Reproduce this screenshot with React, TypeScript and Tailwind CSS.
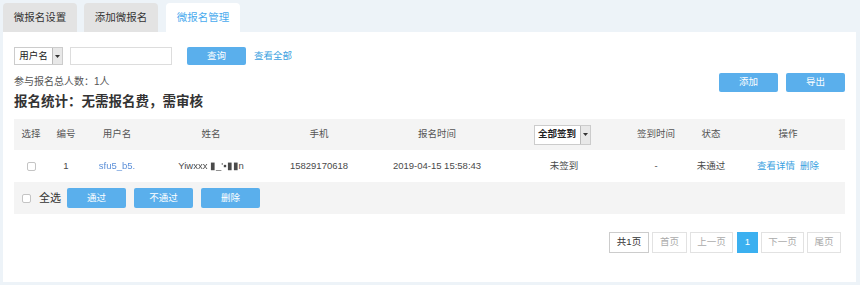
import React from 'react';

const font = "font-['Liberation_Sans','Noto_Sans_CJK_SC',sans-serif]";

const Arrow: React.FC = () => (
  <span className="flex h-full w-[10px] items-center justify-center border-l border-[#bbb] bg-[#e8e8e8]">
    <svg width="5" height="3" viewBox="0 0 5 3">
      <path d="M0 0h5L2.5 3z" fill="#333" />
    </svg>
  </span>
);

const Checkbox: React.FC = () => (
  <span className="inline-block h-[9px] w-[9px] rounded-[2px] border border-[#c4c4c4] bg-white" />
);

const BlueButton: React.FC<{ label: string; className?: string }> = ({ label, className = '' }) => (
  <button className={`h-[19px] w-[59px] rounded-[2px] bg-[#5aafec] text-[9.5px] text-white ${className}`}>{label}</button>
);

const cols = 'grid grid-cols-[34px_36px_66px_122px_94px_142px_112px_72px_38px_116px] items-center text-center';

const PageBtn: React.FC<{ label: string; w: string; active?: boolean; dark?: boolean }> = ({ label, w, active, dark }) => (
  <span
    className={`flex h-[21px] items-center justify-center border text-[9.5px] ${w} ${
      active
        ? 'border-[#3bb0f0] bg-[#3bb0f0] text-white'
        : dark
        ? 'border-[#ccc] bg-white text-[#333]'
        : 'border-[#e2e2e2] bg-white text-[#aaa]'
    }`}
  >
    {label}
  </span>
);

const App: React.FC = () => {
  const headers = ['选择', '编号', '用户名', '姓名', '手机', '报名时间', '', '签到时间', '状态', '操作'];

  return (
    <div className={`${font} h-[285px] w-[860px] bg-[#edf3f8] pl-[3px] pr-[4px] pt-[3px] text-[#333]`}>
      {/* tabs */}
      <div className="flex h-[29px] gap-[7px]">
        <div className="flex w-[74px] items-center justify-center rounded-t-[4px] bg-[#e3e3e3] text-[10.5px] text-[#333]">微报名设置</div>
        <div className="flex w-[74px] items-center justify-center rounded-t-[4px] bg-[#e3e3e3] text-[10.5px] text-[#333]">添加微报名</div>
        <div className="ml-[1px] flex w-[74px] items-center justify-center rounded-t-[4px] bg-white text-[10.5px] text-[#48aaee]">微报名管理</div>
      </div>

      <div className="h-[250px] bg-white px-[11px] pt-[15px]">
        {/* search row */}
        <div className="flex h-[18px] items-center">
          <div className="flex h-full w-[49px] items-center border border-[#ccc]">
            <span className="flex-1 text-center text-[9.5px] text-[#222]">用户名</span>
            <Arrow />
          </div>
          <div className="ml-[7px] h-full w-[102px] border border-[#ddd]" />
          <button className="ml-[15px] h-full w-[59px] rounded-[2px] bg-[#5aafec] text-[9.5px] text-white">查询</button>
          <span className="ml-[8px] text-[9.5px] text-[#3a9fe0]">查看全部</span>
        </div>

        {/* summary */}
        <div className="mt-[8px] flex justify-between">
          <div>
            <div className="mt-[2px] h-[14px] text-[10px] leading-[14px] text-[#555]">参与报名总人数：1人</div>
            <div className="mt-[5px] h-[16px] text-[13.5px] font-bold leading-[16px] text-[#333]">报名统计：无需报名费，需审核</div>
          </div>
          <div className="flex gap-[8px]">
            <BlueButton label="添加" />
            <BlueButton label="导出" />
          </div>
        </div>

        {/* table */}
        <div className="mt-[9px]">
          <div className={`${cols} h-[31px] bg-[#f4f4f4] text-[9.5px] text-[#555]`}>
            {headers.map((h, i) =>
              i === 6 ? (
                <div key={i} className="flex justify-center">
                  <div className="ml-[-4px] flex h-[20px] w-[57px] items-center border border-[#ccc] bg-white">
                    <span className="flex-1 text-center text-[9.5px] font-bold text-[#222]">全部签到</span>
                    <Arrow />
                  </div>
                </div>
              ) : (
                <div key={i}>{h}</div>
              )
            )}
          </div>
          <div className={`${cols} h-[32px] text-[9.5px] text-[#4a4a4a]`}>
            <div className="flex justify-center">
              <Checkbox />
            </div>
            <div>1</div>
            <div className="text-[#5b8fd8] blur-[0.6px]">sfu5_b5.</div>
            <div>
              Yiw<span className="blur-[0.7px]">xxx ▮_'▪▮▮</span>n
            </div>
            <div>15829170618</div>
            <div>2019-04-15 15:58:43</div>
            <div>未签到</div>
            <div>-</div>
            <div>未通过</div>
            <div className="text-[#3a9fe0]">
              查看详情<span className="ml-[5px]">删除</span>
            </div>
          </div>
          <div className="flex h-[32px] items-center bg-[#f4f4f4] pl-[8px]">
            <Checkbox />
            <span className="ml-[8px] text-[11px] text-[#333]">全选</span>
            <div className="ml-[6px] flex gap-[8px]">
              <BlueButton label="通过" className="h-[20px]" />
              <BlueButton label="不通过" className="h-[20px]" />
              <BlueButton label="删除" className="h-[20px]" />
            </div>
          </div>
        </div>

        {/* pagination */}
        <div className="mt-[18px] flex justify-end gap-[3px] pr-[4px]">
          <PageBtn label="共1页" w="w-[40px]" dark />
          <PageBtn label="首页" w="w-[35px]" />
          <PageBtn label="上一页" w="w-[43px]" />
          <PageBtn label="1" w="w-[21px] ml-[1px]" active />
          <PageBtn label="下一页" w="w-[43px]" />
          <PageBtn label="尾页" w="w-[34px]" />
        </div>
      </div>
    </div>
  );
};

export default App;
